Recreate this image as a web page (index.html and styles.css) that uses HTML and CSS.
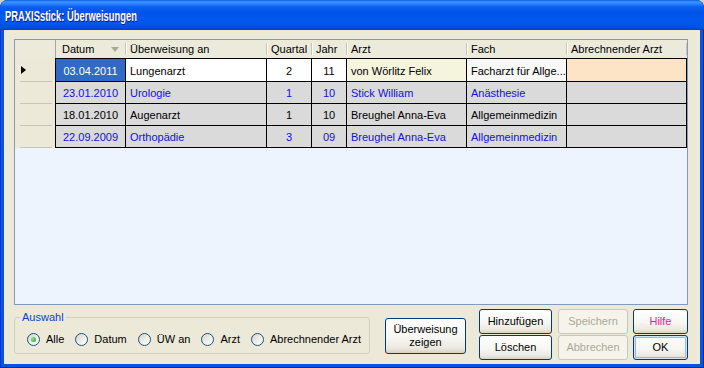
FILE: index.html
```html
<!DOCTYPE html>
<html lang="de">
<head>
<meta charset="utf-8">
<title>PRAXISstick: Überweisungen</title>
<link rel="stylesheet" href="styles.css">
</head>
<body>
<div class="window">
  <div class="titlebar"><span class="title">PRAXISstick: Überweisungen</span></div>
  <div class="client">
    <div class="grid">
      <div class="row head">
        <div class="hsel"></div>
        <div class="hc datum"><span>Datum</span><span class="sort"></span></div>
        <div class="hc">Überweisung an</div>
        <div class="hc">Quartal</div>
        <div class="hc">Jahr</div>
        <div class="hc">Arzt</div>
        <div class="hc">Fach</div>
        <div class="hc last">Abrechnender Arzt</div>
      </div>
      <div class="row r1">
        <div class="s"><span class="cur"></span></div>
        <div class="c ctr selcell">03.04.2011</div>
        <div class="c white">Lungenarzt</div>
        <div class="c ctr white">2</div>
        <div class="c ctr white">11</div>
        <div class="c yellow">von Wörlitz Felix</div>
        <div class="c light">Facharzt für Allge...</div>
        <div class="c last peach"></div>
      </div>
      <div class="row blue">
        <div class="s"></div>
        <div class="c ctr">23.01.2010</div>
        <div class="c">Urologie</div>
        <div class="c ctr">1</div>
        <div class="c ctr">10</div>
        <div class="c">Stick William</div>
        <div class="c">Anästhesie</div>
        <div class="c last"></div>
      </div>
      <div class="row">
        <div class="s"></div>
        <div class="c ctr">18.01.2010</div>
        <div class="c">Augenarzt</div>
        <div class="c ctr">1</div>
        <div class="c ctr">10</div>
        <div class="c">Breughel Anna-Eva</div>
        <div class="c">Allgemeinmedizin</div>
        <div class="c last"></div>
      </div>
      <div class="row blue">
        <div class="s"></div>
        <div class="c ctr">22.09.2009</div>
        <div class="c">Orthopädie</div>
        <div class="c ctr">3</div>
        <div class="c ctr">09</div>
        <div class="c">Breughel Anna-Eva</div>
        <div class="c">Allgemeinmedizin</div>
        <div class="c last"></div>
      </div>
    </div>
    <div class="bottom">
      <fieldset class="auswahl">
        <legend>Auswahl</legend>
        <div class="radios">
          <label class="opt"><span class="radio on"></span>Alle</label>
          <label class="opt"><span class="radio"></span>Datum</label>
          <label class="opt"><span class="radio"></span>ÜW an</label>
          <label class="opt"><span class="radio"></span>Arzt</label>
          <label class="opt"><span class="radio"></span>Abrechnender Arzt</label>
        </div>
      </fieldset>
      <button class="btn show">Überweisung<br>zeigen</button>
      <div class="btncol c1">
        <button class="btn">Hinzufügen</button>
        <button class="btn">Löschen</button>
      </div>
      <div class="btncol c2">
        <button class="btn dis">Speichern</button>
        <button class="btn dis">Abbrechen</button>
      </div>
      <div class="btncol c3">
        <button class="btn help">Hilfe</button>
        <button class="btn def">OK</button>
      </div>
    </div>
  </div>
</div>
</body>
</html>
```
FILE: styles.css
```css
* { box-sizing: border-box; }
html, body { margin: 0; padding: 0; }
body {
  width: 704px; height: 368px; overflow: hidden;
  background: #d4d0c8;
  font-family: "Liberation Sans", Arial, sans-serif;
  font-size: 11px; color: #000;
}
.window {
  width: 704px; height: 368px;
  display: flex; flex-direction: column;
  background: #0855dd;
  border-radius: 8px 8px 0 0;
  overflow: hidden;
  box-shadow: inset 1px 0 #0831d9, inset -1px 0 #001ea0, inset 0 -1px #001ea0;
}
.titlebar {
  height: 30px; flex: none;
  display: flex; align-items: center;
  padding: 2px 0 0 5px;
  background: linear-gradient(180deg, #0a5fe8 0px, #3d95ff 2px, #2a80fa 4px, #0a5ff0 7px, #0055e8 12px, #0058ee 20px, #0055e8 26px, #0048d5 29px, #003cc0 30px);
}
.title {
  display: inline-block;
  color: #fff; font-weight: bold; font-size: 14px;
  font-family: "Liberation Sans", Arial, sans-serif;
  white-space: nowrap;
  transform: scaleX(0.67);
  transform-origin: left center;
  text-shadow: 1px 1px #0f1089;
}
.client {
  flex: 1;
  margin: 0 4px 4px;
  background: #ece9d8;
  padding: 9px 12px 4px 10px;
  display: flex; flex-direction: column;
}
.grid {
  height: 266px; flex: none;
  border: 1px solid #7f9db9;
  background: #eef4fd;
}
.row {
  display: grid;
  grid-template-columns: 40px 70px 141px 45px 35px 120px 100px 121px;
  height: 22px;
}
.row.head { height: 18px; background: #ebeadb; }
.hsel { background: #ebeadb; }
.hc {
  display: flex; align-items: center;
  padding-left: 5px; white-space: nowrap;
  background:
    linear-gradient(#c7c5b2, #c7c5b2) no-repeat 0 3px / 1px 12px,
    linear-gradient(#fff, #fff) no-repeat 1px 3px / 1px 12px,
    #ebeadb;
}
.hc.datum {
  padding-left: 6px;
  border-left: 1px solid #aca899;
  background: #ebeadb;
}
.hc.last {
  background:
    linear-gradient(#c7c5b2, #c7c5b2) no-repeat 0 3px / 1px 12px,
    linear-gradient(#fff, #fff) no-repeat 1px 3px / 1px 12px,
    linear-gradient(#c7c5b2, #c7c5b2) no-repeat 100% 3px / 1px 12px,
    #ebeadb;
}
.sort {
  margin-left: auto; margin-right: 6px; margin-top: 1px;
  width: 0; height: 0;
  border-left: 4px solid transparent;
  border-right: 4px solid transparent;
  border-top: 5px solid #aca899;
}
.s {
  background:
    linear-gradient(#c9c5b3, #c9c5b3) no-repeat 5px 100% / 32px 1px,
    #ece9d8;
  display: flex; align-items: center;
  padding-left: 6px;
}
.cur {
  width: 0; height: 0;
  border-top: 4px solid transparent;
  border-bottom: 4px solid transparent;
  border-left: 5px solid #000;
}
.c {
  display: flex; align-items: center;
  padding: 1px 0 0 4px;
  border-left: 1px solid #000;
  border-bottom: 1px solid #000;
  background: #dadada;
  white-space: nowrap; overflow: hidden;
}
.c.ctr { justify-content: center; padding-left: 0; }
.c.last { border-right: 1px solid #000; }
.r1 { height: 24px; }
.r1 .c { border-top: 1px solid #000; }
.selcell { background: #316ac5; color: #fff; }
.white { background: #fff; }
.yellow { background: #f5f4dc; }
.light { background: #f8f8f6; }
.peach { background: #fde4c6; }
.blue .c { color: #1010e0; }

.bottom {
  margin-top: 4px;
  height: 51px; flex: none;
  display: flex; align-items: flex-start;
}
.auswahl {
  margin: 2px 0 0; width: 356px; min-width: 0; height: 43px;
  flex: none;
  padding: 0 0 0 5px;
  border: 1px solid #d0d0bf; border-radius: 3px;
  display: flex; flex-direction: column; justify-content: center;
  overflow: visible;
}
.auswahl legend {
  color: #0046d5; padding: 0 2px; line-height: 13px;
}
.radios { display: flex; align-items: center; margin: 1px 0 0 7px; }
.opt { display: flex; align-items: center; margin-right: 11px; white-space: nowrap; }
.opt:last-child { margin-right: 0; }
.radio {
  width: 13px; height: 13px; border-radius: 50%;
  border: 1px solid #1c5180;
  background: linear-gradient(135deg, #d6d3c8, #f6f6f2 70%, #fff);
  display: flex; align-items: center; justify-content: center;
  margin-right: 6px; flex: none;
}
.radio.on::after {
  content: ""; width: 5px; height: 5px; border-radius: 50%;
  background: radial-gradient(circle at 35% 35%, #8ce688, #21a121);
}
.btn {
  font-family: "Liberation Sans", Arial, sans-serif;
  font-size: 11px; color: #000;
  border: 1px solid #003c74; border-radius: 3px;
  background: linear-gradient(#ffffff, #f6f6f2 55%, #ece9df 85%, #d8d2c6);
  padding: 0; margin: 0;
  line-height: 13px;
}
.btn.show { width: 81px; height: 36px; margin: 9px 0 0 15px; flex: none; }
.btncol { display: flex; flex-direction: column; gap: 1px; flex: none; }
.btncol .btn { height: 25px; width: 100%; }
.c1 { width: 73px; margin-left: 13px; }
.c2 { width: 70px; margin-left: 6px; }
.c3 { width: 55px; margin-left: 5px; }
.btn.dis { border-color: #c9c7ba; background: #f5f4ea; color: #aca899; }
.btn.help { color: #ff1493; }
.btn.def { box-shadow: inset 0 0 0 1px #cee7ff, inset 0 0 0 2px #98b8ea; }
```
